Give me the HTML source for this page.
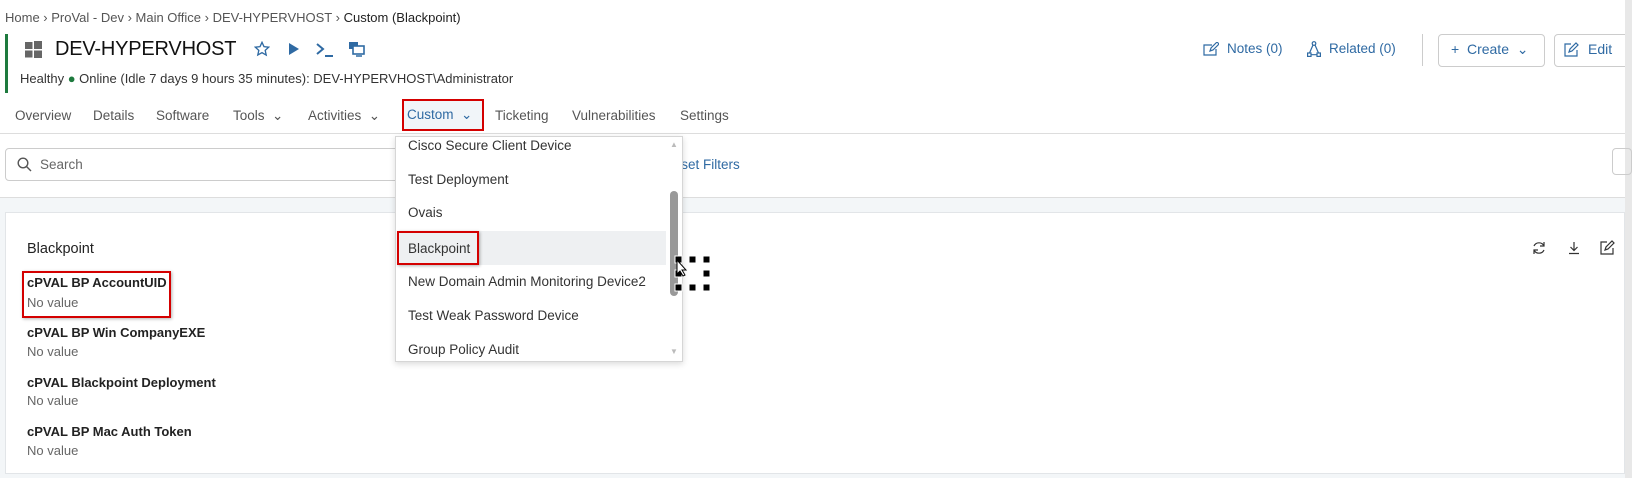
<!DOCTYPE html>
<html><head><meta charset="utf-8"><style>
*{box-sizing:border-box;margin:0;padding:0}
body{width:1632px;height:478px;overflow:hidden;background:#fff;font-family:"Liberation Sans",sans-serif;color:#333;position:relative;font-size:13.5px}
.a{position:absolute;white-space:nowrap}
.blue{color:#2f6aa3}
.lab{font-weight:bold;font-size:13px;color:#222}
.val{color:#666;font-size:13px}
.dd{position:absolute;left:395px;top:136px;width:288px;height:226px;background:#fff;border:1px solid #d6d6d6;box-shadow:0 2px 6px rgba(0,0,0,.15)}
.it{position:absolute;left:12px;font-size:13.5px;color:#333}
</style></head><body>
<div class="a" style="left:5px;top:10px;font-size:13px;color:#555">Home › ProVal - Dev › Main Office › DEV-HYPERVHOST › <span style="color:#222">Custom (Blackpoint)</span></div>
<div class="a" style="left:5px;top:34px;width:3px;height:59px;background:#1e7a3e"></div>
<svg class="a" style="left:25px;top:41px" width="17" height="17" viewBox="0 0 17 17" fill="#666"><rect x="0" y="1" width="7.5" height="7"/><rect x="9" y="0" width="8" height="8"/><rect x="0" y="9.5" width="7.5" height="7"/><rect x="9" y="9.5" width="8" height="7.5"/></svg>
<div class="a" style="left:55px;top:38px;font-size:20px;color:#111;letter-spacing:-0.2px">DEV-HYPERVHOST</div>
<svg class="a" style="left:254px;top:41px" width="16" height="16" viewBox="0 0 24 24" fill="none" stroke="#2f6aa3" stroke-width="2"><path d="M12 2l3 6.5 7 .8-5.2 4.8 1.5 7L12 17.5 5.7 21l1.5-7L2 9.3l7-.8z"/></svg>
<svg class="a" style="left:288px;top:42px" width="12" height="14" viewBox="0 0 12 14"><path d="M1 1l10 6-10 6z" fill="#2f6aa3"/></svg>
<svg class="a" style="left:316px;top:42px" width="18" height="16" viewBox="0 0 18 16" fill="none" stroke="#2f6aa3" stroke-width="2"><path d="M1 2l6 5-6 5M9 14h8"/></svg>
<svg class="a" style="left:348px;top:41px" width="18" height="16" viewBox="0 0 18 16"><rect x="1" y="1" width="9" height="7" fill="#2f6aa3"/><rect x="5" y="5" width="11" height="8" fill="#fff" stroke="#2f6aa3" stroke-width="1.6"/><path d="M8 15h6" stroke="#2f6aa3" stroke-width="1.5"/></svg>
<svg class="a" style="left:1203px;top:42px" width="16" height="14" viewBox="0 0 16 14" fill="none" stroke="#2f6aa3" stroke-width="1.2"><path d="M9 3H1v10h12V7M7 9l1-3 6-6 2 2-6 6z"/></svg>
<div class="a blue" style="left:1227px;top:41px;font-size:13.5px">Notes (0)</div>
<svg class="a" style="left:1307px;top:41px" width="14" height="16" viewBox="0 0 14 16" fill="none" stroke="#2f6aa3" stroke-width="1.2"><circle cx="7" cy="2.5" r="1.8"/><rect x="0.6" y="12" width="3.4" height="3.4"/><rect x="10" y="12" width="3.4" height="3.4"/><path d="M6 4L2.5 12M8 4l3.5 8M4 13.7h6"/></svg>
<div class="a blue" style="left:1329px;top:41px;font-size:13.5px">Related (0)</div>
<div class="a" style="left:1422px;top:34px;width:1px;height:32px;background:#ccc"></div>
<div class="a" style="left:1438px;top:34px;width:107px;height:33px;border:1px solid #ccc;border-radius:4px"></div>
<div class="a blue" style="left:1451px;top:41px;font-size:14px">+&nbsp;&nbsp;Create&nbsp;&nbsp;⌄</div>
<div class="a" style="left:1554px;top:34px;width:90px;height:33px;border:1px solid #ccc;border-radius:4px"></div>
<svg class="a" style="left:1564px;top:42px" width="15" height="15" viewBox="0 0 15 15" fill="none" stroke="#2f6aa3" stroke-width="1.2"><path d="M7 2H1v12h12V8M5 10l1-3 6-6 2 2-6 6z"/></svg>
<div class="a blue" style="left:1588px;top:41px;font-size:14px">Edit</div>
<div class="a" style="left:1625px;top:0;width:7px;height:478px;background:#e8e8e8"></div>
<div class="a" style="left:20px;top:71px;font-size:13px;color:#333">Healthy <span style="color:#1e7a3e">●</span> Online (Idle 7 days 9 hours 35 minutes): DEV-HYPERVHOST\Administrator</div>
<div class="a" style="left:15px;top:108px;font-size:13.5px;color:#555">Overview</div>
<div class="a" style="left:93px;top:108px;font-size:13.5px;color:#555">Details</div>
<div class="a" style="left:156px;top:108px;font-size:13.5px;color:#555">Software</div>
<div class="a" style="left:233px;top:108px;font-size:13.5px;color:#555">Tools&nbsp;&nbsp;⌄</div>
<div class="a" style="left:308px;top:108px;font-size:13.5px;color:#555">Activities&nbsp;&nbsp;⌄</div>
<div class="a" style="left:402px;top:99px;width:82px;height:32px;border:2px solid #d40000;background:#f1f5f9"></div>
<div class="a blue" style="left:407px;top:107px;font-size:13.5px">Custom&nbsp;&nbsp;⌄</div>
<div class="a" style="left:495px;top:108px;font-size:13.5px;color:#555">Ticketing</div>
<div class="a" style="left:572px;top:108px;font-size:13.5px;color:#555">Vulnerabilities</div>
<div class="a" style="left:680px;top:108px;font-size:13.5px;color:#555">Settings</div>
<div class="a" style="left:0;top:133px;width:1625px;height:1px;background:#ddd"></div>
<div class="a" style="left:5px;top:148px;width:400px;height:33px;border:1px solid #ccc;border-radius:4px"></div>
<svg class="a" style="left:17px;top:157px" width="15" height="15" viewBox="0 0 15 15" fill="none" stroke="#555" stroke-width="1.4"><circle cx="6" cy="6" r="4.8"/><path d="M9.5 9.5l4.5 4.5"/></svg>
<div class="a" style="left:40px;top:157px;font-size:13.5px;color:#666">Search</div>
<div class="a blue" style="left:664px;top:157px;font-size:13.5px">Reset Filters</div>
<div class="a" style="left:1612px;top:148px;width:20px;height:27px;border:1px solid #ccc;border-radius:4px"></div>
<div class="a" style="left:0;top:197px;width:1625px;height:281px;background:#f3f6f8;border-top:1px solid #ddd"></div>
<div class="a" style="left:5px;top:212px;width:1620px;height:262px;background:#fff;border:1px solid #e2e5e8"></div>
<div class="a" style="left:27px;top:241px;font-size:14.5px;color:#222">Blackpoint</div>
<svg class="a" style="left:1532px;top:241px" width="14" height="14" viewBox="0 0 14 14" fill="none" stroke="#333" stroke-width="1.2"><path d="M12 5A5.5 5.5 0 0 0 2 5M2 9a5.5 5.5 0 0 0 10 0M12 1v4H8M2 13V9h4"/></svg>
<svg class="a" style="left:1567px;top:241px" width="14" height="14" viewBox="0 0 14 14" fill="none" stroke="#333" stroke-width="1.2"><path d="M7 1v8M3.5 6L7 9.5 10.5 6M2 12.5h10"/></svg>
<svg class="a" style="left:1600px;top:240px" width="15" height="15" viewBox="0 0 15 15" fill="none" stroke="#333" stroke-width="1.2"><path d="M7 2H1v12h12V8M5 10l1-3 6-6 2 2-6 6z"/></svg>
<div class="a lab" style="left:27px;top:275px">cPVAL BP AccountUID</div>
<div class="a val" style="left:27px;top:295px">No value</div>
<div class="a" style="left:22px;top:271px;width:149px;height:47px;border:2px solid #d40000;box-shadow:1px 1px 3px rgba(0,0,0,.3)"></div>
<div class="a lab" style="left:27px;top:325px">cPVAL BP Win CompanyEXE</div>
<div class="a val" style="left:27px;top:344px">No value</div>
<div class="a lab" style="left:27px;top:375px">cPVAL Blackpoint Deployment</div>
<div class="a val" style="left:27px;top:393px">No value</div>
<div class="a lab" style="left:27px;top:424px">cPVAL BP Mac Auth Token</div>
<div class="a val" style="left:27px;top:443px">No value</div>
<div class="dd">
<div class="it" style="top:1px">Cisco Secure Client Device</div>
<div class="it" style="top:35px">Test Deployment</div>
<div class="it" style="top:68px">Ovais</div>
<div class="a" style="left:1px;top:94px;width:269px;height:34px;background:#eef0f2"></div>
<div class="it" style="top:104px">Blackpoint</div>
<div class="a" style="left:1px;top:94px;width:82px;height:34px;border:2px solid #d40000;box-shadow:1px 1px 3px rgba(0,0,0,.3)"></div>
<div class="it" style="top:137px">New Domain Admin Monitoring Device2</div>
<div class="it" style="top:171px">Test Weak Password Device</div>
<div class="it" style="top:205px">Group Policy Audit</div>
<div class="a" style="left:274px;top:54px;width:8px;height:105px;background:#999;border-radius:4px"></div>
<div class="a" style="left:274px;top:3px;font-size:8px;color:#bbb">▲</div>
<div class="a" style="left:274px;top:210px;font-size:8px;color:#bbb">▼</div>
</div>
<svg class="a" style="left:674px;top:255px" width="38" height="38" viewBox="0 0 38 38"><g fill="#000" stroke="#fff" stroke-width="1"><rect x="1" y="1" width="7" height="7"/><rect x="15" y="1" width="7" height="7"/><rect x="29" y="1" width="7" height="7"/><rect x="1" y="15" width="7" height="7"/><rect x="29" y="15" width="7" height="7"/><rect x="1" y="29" width="7" height="7"/><rect x="15" y="29" width="7" height="7"/><rect x="29" y="29" width="7" height="7"/></g><path d="M3 5v14l3-3 3 5 2-1-3-5h4z" fill="#fff" stroke="#000" stroke-width="1"/></svg>
</body></html>
